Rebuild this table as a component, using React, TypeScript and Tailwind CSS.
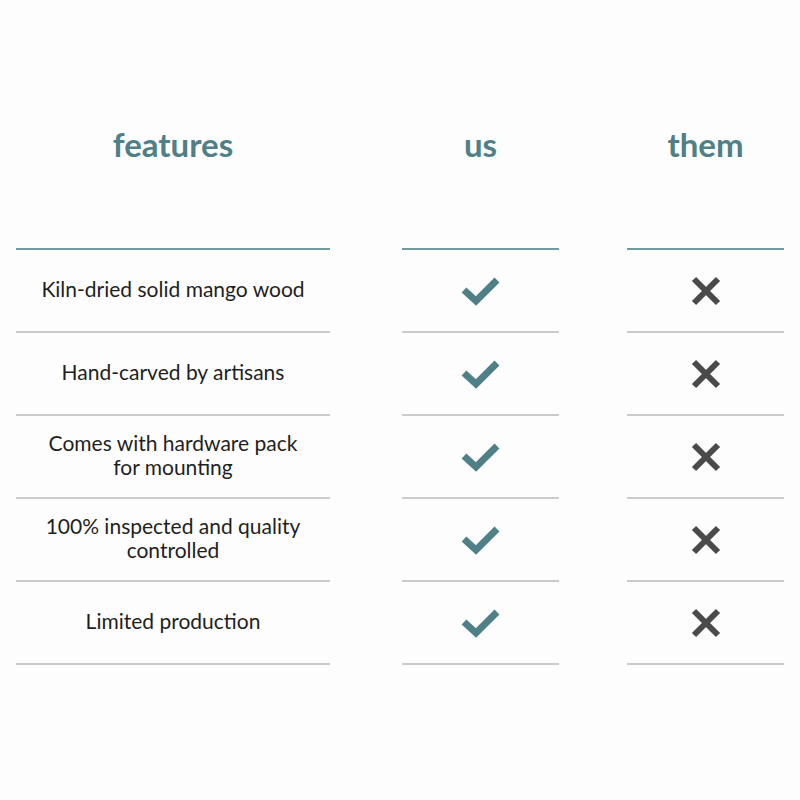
const rows = [
  ["Kiln-dried solid mango wood"],
  ["Hand-carved by artisans"],
  ["Comes with hardware pack", "for mounting"],
  ["100% inspected and quality", "controlled"],
  ["Limited production"],
];

function Check() {
  return (
    <svg width="40" height="32" viewBox="0 0 40 32">
      <path d="M3 15 L15 26 L36 5" fill="none" stroke="#4f7f87" strokeWidth="7" />
    </svg>
  );
}

function Cross() {
  return (
    <svg width="30" height="30" viewBox="0 0 30 30">
      <path d="M3 3 L27 27 M27 3 L3 27" fill="none" stroke="#4a4a4a" strokeWidth="6" />
    </svg>
  );
}

function Column({ title, width, children }: { title: string; width: string; children: React.ReactNode[] }) {
  return (
    <div className={`flex flex-col ${width}`}>
      <div className="h-[248px] pt-[123px] text-center">
        <h2 className="text-[33px] leading-[42px] font-bold text-[#4f7f87]">{title}</h2>
      </div>
      <div className="border-t-2 border-[#6f9aa0]">
        {children.map((c, i) => (
          <div key={i} className="h-[83px] border-b-2 border-[#cbcbcb] flex items-center justify-center text-center">
            {c}
          </div>
        ))}
      </div>
    </div>
  );
}

export default function App() {
  return (
    <div className="w-[800px] h-[800px] bg-[#fdfdfd] px-4 flex justify-between" style={{ fontFamily: "Lato, 'Noto Sans', sans-serif" }}>
      <Column title="features" width="w-[314px]">
        {rows.map((r, i) => (
          <p key={i} className="mb-[3px] text-[21px] leading-[24px] text-[#1f1f1f]">
            {r.map((l, j) => (
              <span key={j} className="block">{l}</span>
            ))}
          </p>
        ))}
      </Column>
      <Column title="us" width="w-[157px] ml-[72px]">
        {rows.map((_, i) => <Check key={i} />)}
      </Column>
      <Column title="them" width="w-[157px] ml-[68px]">
        {rows.map((_, i) => <Cross key={i} />)}
      </Column>
    </div>
  );
}
